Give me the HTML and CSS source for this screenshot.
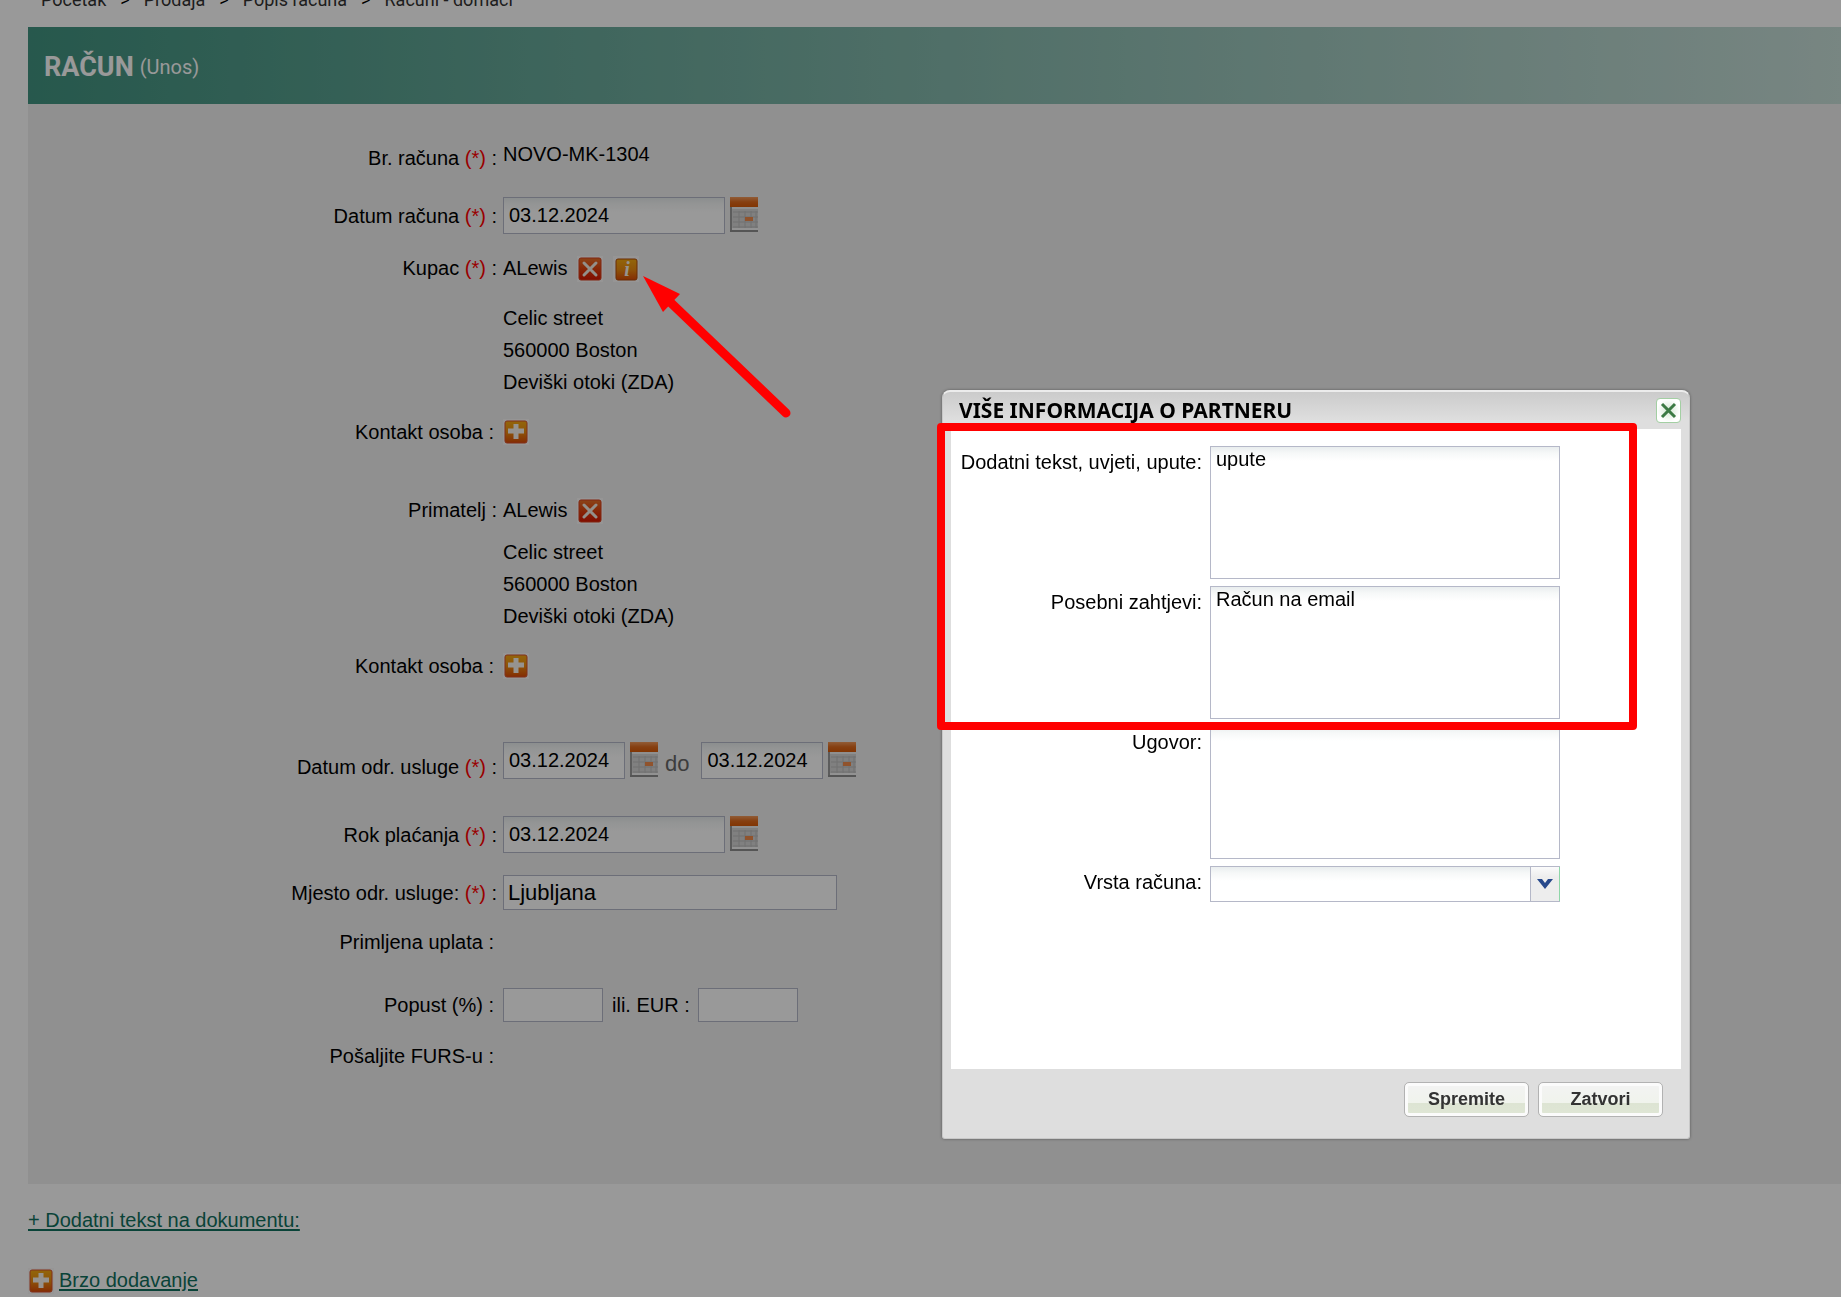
FILE: index.html
```html
<!DOCTYPE html>
<html lang="hr">
  <head>
    <meta charset="UTF-8" />
    <meta name="viewport" content="width=device-width, initial-scale=1" />
    <title>Račun</title>
    <link rel="stylesheet" href="styles.css">
  </head>
  <body>
    <!-- shared icons -->
    <svg class="sprite" aria-hidden="true">
      <defs>
        <linearGradient id="grad-red" x1="0" y1="0" x2="0" y2="1">
          <stop offset="0" stop-color="#e8722a" />
          <stop offset="0.5" stop-color="#e0400c" />
          <stop offset="1" stop-color="#d81400" />
        </linearGradient>
        <linearGradient id="grad-orange" x1="0" y1="0" x2="0" y2="1">
          <stop offset="0" stop-color="#f5aa12" />
          <stop offset="0.5" stop-color="#ec8c10" />
          <stop offset="1" stop-color="#dc4a06" />
        </linearGradient>
        <linearGradient id="grad-calendar" x1="0" y1="0" x2="0" y2="1">
          <stop offset="0" stop-color="#f29a5c" />
          <stop offset="0.5" stop-color="#e06a1c" />
          <stop offset="1" stop-color="#d85a08" />
        </linearGradient>
      </defs>
      <symbol id="icon-delete" viewBox="0 0 26 26">
        <rect width="26" height="26" fill="#fbf8f8" />
        <rect x="2" y="2" width="22" height="22" rx="2" fill="url(#grad-red)" stroke="#d8401c" />
        <path d="M7 7L19 19M19 7L7 19" stroke="#f6efe6" stroke-width="3" stroke-linecap="round" />
      </symbol>
      <symbol id="icon-info" viewBox="0 0 26 26">
        <rect width="26" height="26" fill="#fbf8f8" />
        <rect x="3" y="3" width="21" height="21" rx="2" fill="url(#grad-orange)" stroke="#b04a08" />
        <text x="14" y="20" text-anchor="middle" class="info-glyph">i</text>
      </symbol>
      <symbol id="icon-add" viewBox="0 0 26 26">
        <rect width="26" height="26" fill="#fbf8f8" />
        <rect x="2" y="2" width="22" height="22" rx="2" fill="url(#grad-orange)" stroke="#d8502a" />
        <path d="M13 5V20M5 12H21" stroke="#fbf6ee" stroke-width="5" />
      </symbol>
      <symbol id="icon-calendar" viewBox="0 0 28 35">
        <rect width="28" height="10" fill="url(#grad-calendar)" />
        <rect y="10" width="28" height="24" fill="#d6d6d6" />
        <path d="M1 10V33" stroke="#9a9a9a" stroke-width="2" />
        <path d="M2 11H28" stroke="#efefef" stroke-width="2" />
        <path d="M3 15H28M3 20H28M3 25H28M3 30H28M9 14V31M15 14V31M21 14V31M26 14V31" stroke="#bcbcbc" />
        <rect x="15" y="20" width="8" height="4" fill="#f08a4c" />
        <path d="M2 32H28" stroke="#f4f4f4" stroke-width="2" />
        <path d="M0 34H28" stroke="#8e8e8e" stroke-width="2" />
      </symbol>
    </svg>

    <nav class="breadcrumb">
      <a href="#">Početak</a>
      <span>&gt;</span>
      <a href="#">Prodaja</a>
      <span>&gt;</span>
      <a href="#">Popis računa</a>
      <span>&gt;</span>
      <a href="#">Računi - domaći</a>
    </nav>

    <main class="document">
      <header class="document-header">
        <h1>RAČUN</h1>
        <span>(Unos)</span>
      </header>

      <form class="invoice-form">
        <div class="form-row">
          <span class="label row-end">Br. računa <em>(*)</em> :</span>
          <div class="field row-start">NOVO-MK-1304</div>
        </div>
        <div class="form-row row-date">
          <label class="label" for="date">Datum računa <em>(*)</em> :</label>
          <div class="field">
            <input type="text" id="date" class="date-input" value="03.12.2024" />
            <button type="button" class="icon-btn calendar-btn" aria-label="Kalendar">
              <svg class="calendar"><use href="#icon-calendar" /></svg>
            </button>
          </div>
        </div>
        <div class="form-row">
          <span class="label">Kupac <em>(*)</em> :</span>
          <div class="field partner">
            ALewis
            <button type="button" class="icon-btn" aria-label="Ukloni kupca">
              <svg class="icon"><use href="#icon-delete" /></svg>
            </button>
            <button type="button" class="icon-btn" aria-label="Više informacija">
              <svg class="icon"><use href="#icon-info" /></svg>
            </button>
          </div>
        </div>
        <address>
          Celic street<br />
          560000 Boston<br />
          Deviški otoki (ZDA)
        </address>
        <div class="form-row">
          <span class="label optional">Kontakt osoba :</span>
          <div class="field">
            <button type="button" class="icon-btn" aria-label="Dodaj kontakt osobu kupca">
              <svg class="icon"><use href="#icon-add" /></svg>
            </button>
          </div>
        </div>

        <div class="form-row row-recipient">
          <span class="label">Primatelj :</span>
          <div class="field partner">
            ALewis
            <button type="button" class="icon-btn" aria-label="Ukloni primatelja">
              <svg class="icon"><use href="#icon-delete" /></svg>
            </button>
          </div>
        </div>
        <address class="recipient-address">
          Celic street<br />
          560000 Boston<br />
          Deviški otoki (ZDA)
        </address>
        <div class="form-row">
          <span class="label optional">Kontakt osoba :</span>
          <div class="field">
            <button type="button" class="icon-btn" aria-label="Dodaj kontakt osobu primatelja">
              <svg class="icon"><use href="#icon-add" /></svg>
            </button>
          </div>
        </div>

        <div class="form-row row-service">
          <label class="label row-end" for="service-from">Datum odr. usluge <em>(*)</em> :</label>
          <div class="field">
            <input type="text" id="service-from" class="date-input short" value="03.12.2024" />
            <button type="button" class="icon-btn calendar-btn" aria-label="Kalendar">
              <svg class="calendar"><use href="#icon-calendar" /></svg>
            </button>
            <label class="until" for="service-to">do</label>
            <input type="text" id="service-to" class="date-input short" value="03.12.2024" />
            <button type="button" class="icon-btn calendar-btn" aria-label="Kalendar">
              <svg class="calendar"><use href="#icon-calendar" /></svg>
            </button>
          </div>
        </div>
        <div class="form-row row-due">
          <label class="label" for="due">Rok plaćanja <em>(*)</em> :</label>
          <div class="field">
            <input type="text" id="due" class="date-input" value="03.12.2024" />
            <button type="button" class="icon-btn calendar-btn" aria-label="Kalendar">
              <svg class="calendar"><use href="#icon-calendar" /></svg>
            </button>
          </div>
        </div>
        <div class="form-row row-place">
          <label class="label" for="place">Mjesto odr. usluge: <em>(*)</em> :</label>
          <div class="field">
            <input type="text" id="place" class="place-input" value="Ljubljana" />
          </div>
        </div>
        <div class="form-row row-payment">
          <span class="label optional">Primljena uplata :</span>
        </div>
        <div class="form-row row-discount">
          <label class="label optional" for="discount">Popust (%) :</label>
          <div class="field">
            <input type="text" id="discount" class="amount-input" />
            <label class="amount-label" for="discount-eur">ili. EUR :</label>
            <input type="text" id="discount-eur" class="amount-input" />
          </div>
        </div>
        <div class="form-row">
          <span class="label optional">Pošaljite FURS-u :</span>
        </div>
      </form>
    </main>

    <div class="document-links">
      <a href="#">+ Dodatni tekst na dokumentu:</a>
      <a href="#" class="quick-add">
        <svg class="icon"><use href="#icon-add" /></svg>
        <span>Brzo dodavanje</span>
      </a>
    </div>

    <div class="overlay"></div>

    <svg class="arrow" viewBox="0 0 152 146" aria-hidden="true">
      <path d="M26 25L143 137" stroke="#ff0000" stroke-width="9" stroke-linecap="round" />
      <path d="M0 0L37 18L20 36Z" fill="#ff0000" />
    </svg>

    <section class="dialog" role="dialog" aria-labelledby="dialog-title">
      <header class="dialog-header">
        <h2 id="dialog-title">VIŠE INFORMACIJA O PARTNERU</h2>
        <button type="button" class="close-btn" aria-label="Zatvori prozor">
          <svg viewBox="0 0 23 23">
            <path d="M5 5L18 18M18 5L5 18" stroke="#3c7a44" stroke-width="3" />
          </svg>
        </button>
      </header>
      <form class="dialog-body">
        <label for="extra-text">Dodatni tekst, uvjeti, upute:</label>
        <textarea id="extra-text">upute</textarea>
        <label for="requests">Posebni zahtjevi:</label>
        <textarea id="requests">Račun na email</textarea>
        <label for="contract">Ugovor:</label>
        <textarea id="contract"></textarea>
        <label for="invoice-type">Vrsta računa:</label>
        <div class="select">
          <select id="invoice-type">
            <option></option>
          </select>
          <span class="select-trigger">
            <svg viewBox="0 0 16 12"><path d="M0 1H5L8 5L11 1H16L8 11Z" fill="#27498c" /></svg>
          </span>
        </div>
      </form>
      <footer class="dialog-footer">
        <button type="button" class="btn">Spremite</button>
        <button type="button" class="btn">Zatvori</button>
      </footer>
      <div class="highlight"></div>
    </section>
  </body>
</html>
```

FILE: styles.css
```css
:root {
  --border: #b5b8c8;
  --label-width: 469px;
  --input-shade: linear-gradient(#e9edee, #f6f8f8 6px, #ffffff 14px);
}

* {
  box-sizing: border-box;
}

body {
  margin: 0;
  background: #ffffff;
  font-family: "Liberation Sans", Arial, sans-serif;
  font-size: 20px;
  line-height: 24px;
  color: #000000;
}

input,
textarea,
select,
button {
  font-family: inherit;
  font-size: 20px;
  color: inherit;
}

.sprite {
  position: absolute;
  width: 0;
  height: 0;
}

.icon {
  display: block;
  width: 26px;
  height: 26px;
}

.calendar {
  display: block;
  width: 28px;
  height: 35px;
}

.info-glyph {
  font: italic bold 20px "Liberation Serif", serif;
  fill: #fbf6ee;
}

/* scrolled partly out of view */
.breadcrumb {
  display: flex;
  gap: 14px;
  height: 39px;
  margin-top: -12px;
  padding-left: 41px;
  font-family: Roboto, sans-serif;
  font-size: 18px;
}

.breadcrumb a {
  color: #333333;
  text-decoration: none;
}

.document {
  margin-left: 28px;
  background: #f1f1f1;
}

.document-header {
  display: flex;
  align-items: center;
  gap: 6px;
  height: 77px;
  padding: 2px 0 0 16px;
  background: linear-gradient(90deg, #419380, #c8dfd9);
  color: #ffffff;
  font-family: Roboto, sans-serif;
}

.document-header h1 {
  margin: 0;
  font-size: 27px;
  font-weight: bold;
}

/* invoice form */
.invoice-form {
  padding: 38px 0 114px;
}

.form-row {
  display: grid;
  grid-template-columns: var(--label-width) 1fr;
  column-gap: 6px;
  align-items: center;
  min-height: 28px;
  margin-top: 20px;
}

.form-row:first-child {
  margin-top: 0;
}

.row-date {
  margin-top: 27px;
}
.row-recipient {
  margin-top: 50px;
}
.row-service {
  margin-top: 62px;
}
.row-due {
  margin-top: 37px;
}
.row-place {
  margin-top: 22px;
}
.row-payment {
  margin-top: 18px;
}
.row-discount {
  margin-top: 32px;
}

.row-start {
  align-self: start;
}
.row-end {
  align-self: end;
}

.label {
  text-align: right;
}

.label.optional {
  padding-right: 3px;
}

.label em {
  font-style: normal;
  color: #ff0000;
}

.field {
  display: flex;
  align-items: center;
}

.partner {
  gap: 10px;
}

address {
  margin-top: 20px;
  padding-left: calc(var(--label-width) + 6px);
  font-style: normal;
  line-height: 32px;
}

.recipient-address {
  margin-top: 12px;
}

.icon-btn {
  padding: 0;
  border: 0;
  background: none;
  cursor: pointer;
}

.partner .icon-btn {
  margin-top: 2px;
}

.calendar-btn {
  align-self: flex-start;
}

.date-input,
.place-input,
.amount-input {
  border: 1px solid var(--border);
  background: #ffffff;
}

.date-input {
  width: 222px;
  height: 37px;
  margin-right: 5px;
  padding: 0 5px;
  background: var(--input-shade);
}

.date-input.short {
  width: 122px;
}

.until {
  padding: 6px 12px 0 7px;
  font-size: 22px;
  color: #666666;
}

.place-input {
  width: 334px;
  height: 35px;
  padding: 0 4px;
  font-size: 22px;
}

.amount-input {
  width: 100px;
  height: 34px;
}

.amount-label {
  padding: 0 8px 0 9px;
}

.document-links {
  display: flex;
  flex-direction: column;
  align-items: flex-start;
  gap: 36px;
  padding: 24px 0 0 28px;
}

.document-links a {
  color: #10705e;
  text-underline-offset: 2px;
  text-decoration-thickness: 2px;
}

.quick-add {
  display: flex;
  gap: 5px;
}

.overlay {
  position: fixed;
  inset: 0;
  background: rgba(0, 0, 0, 0.4);
}

.arrow {
  position: absolute;
  left: 643px;
  top: 276px;
  width: 152px;
}

/* partner info dialog */
.dialog {
  position: absolute;
  left: 942px;
  top: 390px;
  width: 748px;
  padding: 0 8px;
  border: 1px solid #c8c8c8;
  border-top: 2px solid #ececec;
  border-radius: 8px 8px 3px 3px;
  background: linear-gradient(#cbcbcb, #dedede 28px);
  box-shadow: 0 0 3px rgba(0, 0, 0, 0.4);
}

.dialog-header {
  display: flex;
  align-items: center;
  justify-content: space-between;
  height: 37px;
  padding-left: 8px;
}

.dialog-header h2 {
  margin: 0;
  padding-bottom: 2px;
  font-family: "Noto Sans", Tahoma, sans-serif;
  font-size: 21px;
}

.close-btn {
  width: 25px;
  height: 25px;
  padding: 0;
  border: 1px solid #a3cfa3;
  border-radius: 4px;
  background: radial-gradient(#d3e8d3, #ffffff 70%);
  cursor: pointer;
}

.close-btn svg {
  display: block;
}

.dialog-body {
  display: grid;
  grid-template-columns: 251px 350px;
  column-gap: 8px;
  row-gap: 7px;
  align-content: start;
  min-height: 640px;
  padding-top: 17px;
  background: #ffffff;
}

.dialog-body label {
  padding-top: 4px;
  text-align: right;
}

.dialog-body textarea {
  height: 133px;
  padding: 0 5px;
  border: 1px solid var(--border);
  background: var(--input-shade);
  line-height: 24px;
  resize: none;
}

.select {
  position: relative;
}

.select select {
  width: 100%;
  height: 36px;
  border: 1px solid var(--border);
  border-radius: 0;
  background: var(--input-shade);
  appearance: none;
}

.select-trigger {
  position: absolute;
  top: 1px;
  right: 0;
  bottom: 1px;
  display: flex;
  align-items: center;
  justify-content: center;
  width: 30px;
  border-left: 1px solid var(--border);
  border-right: 1px solid #8fd6a8;
  background: linear-gradient(#fbfbfb, #ededed 10px);
  pointer-events: none;
}

.select-trigger svg {
  width: 16px;
  height: 12px;
}

.dialog-footer {
  display: flex;
  justify-content: flex-end;
  gap: 9px;
  height: 69px;
  padding: 13px 18px 0 0;
}

.btn {
  width: 125px;
  height: 35px;
  padding: 0;
  border: 1px solid #b2b2b2;
  border-radius: 5px;
  background: linear-gradient(#f3f3f3, #f0f3ec 60%, #dde4d3 60%, #dfe6d5);
  box-shadow: inset 0 0 0 3px #fbfbfb;
  font-size: 18px;
  font-weight: bold;
  color: #333333;
  cursor: pointer;
}

.highlight {
  position: absolute;
  top: 31px;
  left: -6px;
  right: 52px;
  height: 307px;
  border: 8px solid #ff0000;
  border-radius: 4px;
  pointer-events: none;
}
```
